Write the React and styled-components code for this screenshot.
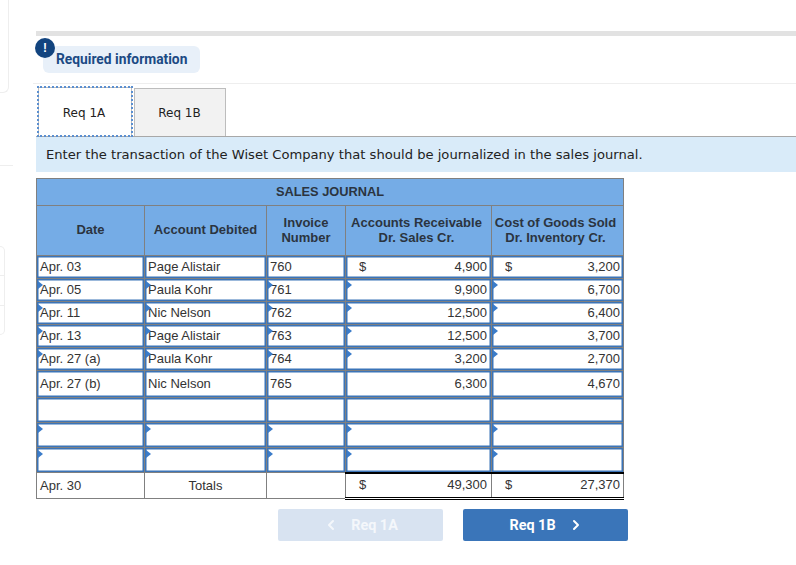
import React from "react";
import styled, { createGlobalStyle } from "styled-components";
import { ChevronLeft, ChevronRight } from "lucide-react";

const Global = createGlobalStyle`
  html, body { margin: 0; padding: 0; background: #fff; overflow: hidden; }
  body { font-family: "Liberation Sans", Arial, sans-serif; }
`;

const Page = styled.div`
  display: flex;
  width: 796px;
  height: 565px;
  overflow: hidden;
`;

const Sidebar = styled.aside`
  flex: 0 0 36px;
  display: flex;
  flex-direction: column;
`;

const SideCard = styled.div`
  width: 9px;
  height: 93px;
  box-sizing: border-box;
  border: 1px solid #eeeeee;
  border-left: 0;
  border-top: 0;
  border-bottom-right-radius: 6px;
`;

const SideRule = styled.div`
  width: 13px;
  height: 1px;
  margin-top: 72px;
  background: #eeeeee;
`;

const SideList = styled.div`
  width: 5px;
  height: 89px;
  margin-top: 80px;
  box-sizing: border-box;
  border: 1px solid #eeeeee;
  border-left: 0;
  border-radius: 0 5px 5px 0;
  display: flex;
  flex-direction: column;
  justify-content: space-evenly;
`;

const SideTick = styled.div`
  height: 1px;
  background: #eeeeee;
`;

const Main = styled.main`
  flex: 1;
  padding-top: 31px;
  min-width: 0;
`;

const TopBar = styled.div`
  height: 5px;
  background: #e2e2e2;
`;

const Notice = styled.div`
  position: relative;
  display: flex;
  align-items: center;
  box-sizing: border-box;
  width: 157px;
  height: 27px;
  margin: 10px 0 0 7px;
  padding: 0 0 2px 13px;
  border-radius: 6px;
  background: #e8f0f9;
  color: #1b4a84;
  font: 700 13.8px Roboto, "Liberation Sans", sans-serif;
`;

const Badge = styled.span`
  position: absolute;
  left: -8px;
  top: -8px;
  width: 20px;
  height: 20px;
  border-radius: 50%;
  background: #12447f;
  color: #fff;
  display: flex;
  align-items: center;
  justify-content: center;
  font: 700 12px "Liberation Sans", sans-serif;
`;

const Divider = styled.div`
  height: 1px;
  margin: 10px 0 0 -3px;
  background: #eeeeee;
`;

const Tabs = styled.div`
  display: flex;
  gap: 2px;
  margin: 4px 0 0 2px;
  height: 48px;
`;

const Tab = styled.div`
  box-sizing: border-box;
  display: flex;
  align-items: center;
  justify-content: center;
  width: 92px;
  padding-right: 1px;
  font: 12px "DejaVu Sans", Verdana, sans-serif;
  color: #222;
  background: #f2f2f2;
  border: 1px solid #bdbdbd;
  border-bottom: 0;
`;

const ActiveTab = styled(Tab)`
  width: 94px;
  height: 49px;
  margin-top: -1px;
  padding: 1px 2px 0 0;
  background: #fff;
  outline: 2px dotted #5b8fd0;
  outline-offset: -1px;
`;

const Banner = styled.div`
  box-sizing: border-box;
  height: 36px;
  padding-left: 10px;
  display: flex;
  align-items: center;
  background: #d9ebf9;
  border-top: 1px solid #a8a8a8;
  color: #222;
  font: 13.11px "DejaVu Sans", Verdana, sans-serif;
`;

const Journal = styled.table`
  border-collapse: collapse;
  table-layout: fixed;
  width: 587px;
  margin-top: 6px;
  color: #333;
  font: 13px/14px "Liberation Sans", Arial, sans-serif;
`;

const HeadCell = styled.th`
  padding: 0 ${(p) => p.$right || 0}px 2px 0;
  background: #75ace6;
  border: 1px solid #808080;
  color: #2b3440;
  font: 700 13px/15px "Liberation Sans", Arial, sans-serif;
  text-align: center;
  vertical-align: middle;
`;

const TitleCell = styled(HeadCell)`
  font-size: 12.8px;
`;

const Row = styled.tr`
  height: ${(p) => p.$h}px;
`;

const Cell = styled.td`
  position: relative;
  padding: 0 3px;
  border: 1px solid #808080;
  box-shadow: ${(p) => (p.$input ? "inset 0 0 0 1.5px #3b74b8" : "none")};
  text-align: ${(p) => (p.$center ? "center" : "left")};
  white-space: nowrap;
  vertical-align: middle;

  ${(p) =>
    p.$mark
      ? `&::before {
    content: "";
    position: absolute;
    left: 1px;
    top: 2px;
    border-left: 5px solid #3b7cc9;
    border-top: 4px solid transparent;
    border-bottom: 4px solid transparent;
  }`
      : ""}
`;

const TotalCell = styled(Cell)`
  border-top: 2px solid #000;
  border-bottom: 3px double #000;
`;

const Money = styled.div`
  display: flex;
  justify-content: space-between;
  padding: 0 ${(p) => p.$right || 0}px 0 10px;
`;

const Nav = styled.div`
  display: flex;
  gap: 20px;
  margin: 9px 0 0 242px;
`;

const NavButton = styled.div`
  box-sizing: border-box;
  width: 165px;
  height: 32px;
  padding-left: ${(p) => (p.$disabled ? 0 : 2)}px;
  display: flex;
  align-items: center;
  justify-content: center;
  gap: 12px;
  border-radius: 2px;
  background: ${(p) => (p.$disabled ? "#d8e3f1" : "#3a75b9")};
  color: ${(p) => (p.$disabled ? "#f4f7fb" : "#fff")};
  font: 700 14.4px Roboto, "Liberation Sans", sans-serif;
`;

const rows = [
  ["Apr. 03", "Page Alistair", "760", "4,900", "3,200", false, true, 23],
  ["Apr. 05", "Paula Kohr", "761", "9,900", "6,700", true, false, 23],
  ["Apr. 11", "Nic Nelson", "762", "12,500", "6,400", true, false, 23],
  ["Apr. 13", "Page Alistair", "763", "12,500", "3,700", true, false, 23],
  ["Apr. 27 (a)", "Paula Kohr", "764", "3,200", "2,700", true, false, 23],
  ["Apr. 27 (b)", "Nic Nelson", "765", "6,300", "4,670", false, false, 27],
  ["", "", "", "", "", false, false, 25],
  ["", "", "", "", "", true, false, 25],
  ["", "", "", "", "", true, false, 25],
];

function Amount({ sign, value, right }) {
  return (
    <Money $right={right}>
      <span>{sign ? "$" : ""}</span>
      <span>{value}</span>
    </Money>
  );
}

export default function App() {
  return (
    <Page>
      <Global />
      <Sidebar>
        <SideCard />
        <SideRule />
        <SideList>
          <SideTick />
          <SideTick />
        </SideList>
      </Sidebar>
      <Main>
        <TopBar />
        <Notice>
          <Badge>!</Badge>
          Required information
        </Notice>
        <Divider />
        <Tabs>
          <ActiveTab>Req 1A</ActiveTab>
          <Tab>Req 1B</Tab>
        </Tabs>
        <Banner>Enter the transaction of the Wiset Company that should be journalized in the sales journal.</Banner>
        <Journal>
          <colgroup>
            <col style={{ width: 108 }} />
            <col style={{ width: 122 }} />
            <col style={{ width: 79 }} />
            <col style={{ width: 146 }} />
            <col style={{ width: 132 }} />
          </colgroup>
          <thead>
            <Row $h={27}>
              <TitleCell colSpan={5}>SALES JOURNAL</TitleCell>
            </Row>
            <Row $h={50}>
              <HeadCell>Date</HeadCell>
              <HeadCell>Account Debited</HeadCell>
              <HeadCell>Invoice<br />Number</HeadCell>
              <HeadCell $right={4}>Accounts Receivable<br />Dr. Sales Cr.</HeadCell>
              <HeadCell $right={4}>Cost of Goods Sold<br />Dr. Inventory Cr.</HeadCell>
            </Row>
          </thead>
          <tbody>
            {rows.map(([date, account, invoice, ar, cogs, mark, sign, h], i) => (
              <Row key={i} $h={h}>
                <Cell $input $mark={mark}>{date}</Cell>
                <Cell $input $mark={mark}>{account}</Cell>
                <Cell $input $mark={mark}>{invoice}</Cell>
                <Cell $input $mark={mark}><Amount sign={sign} value={ar} right={1} /></Cell>
                <Cell $input $mark={mark}><Amount sign={sign} value={cogs} /></Cell>
              </Row>
            ))}
            <Row $h={26}>
              <Cell>Apr. 30</Cell>
              <Cell $center>Totals</Cell>
              <Cell />
              <TotalCell><Amount sign value="49,300" right={1} /></TotalCell>
              <TotalCell><Amount sign value="27,370" /></TotalCell>
            </Row>
          </tbody>
        </Journal>
        <Nav>
          <NavButton $disabled>
            <ChevronLeft size={16} strokeWidth={3} />
            Req 1A
          </NavButton>
          <NavButton>
            Req 1B
            <ChevronRight size={16} strokeWidth={3} />
          </NavButton>
        </Nav>
      </Main>
    </Page>
  );
}
